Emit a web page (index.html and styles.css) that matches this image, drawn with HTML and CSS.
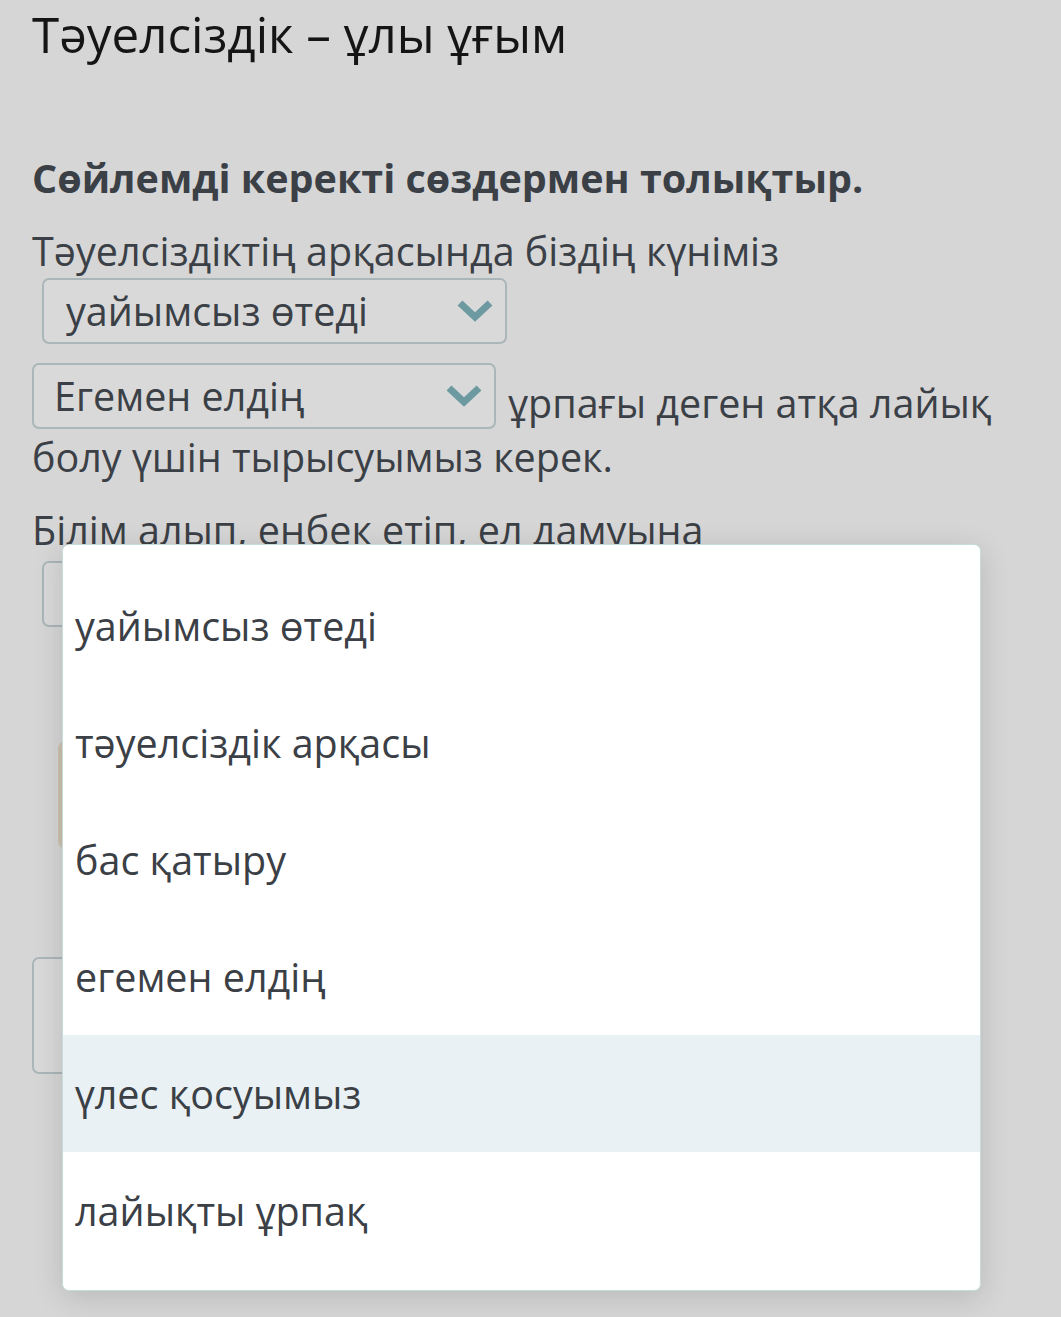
FILE: index.html
```html
<!DOCTYPE html>
<html lang="kk">
<head>
<meta charset="utf-8">
<title>Тәуелсіздік – ұлы ұғым</title>
<link rel="stylesheet" href="styles.css">
</head>
<body>
<div class="page">
  <h1 class="title">Тәуелсіздік – ұлы ұғым</h1>
  <h2 class="task">Сөйлемді керекті сөздермен толықтыр.</h2>

  <p class="q q1">Тәуелсіздіктің арқасында біздің күніміз<br><span class="sel sel-a"><span class="sel-text">уайымсыз өтеді</span><svg class="chev" viewBox="0 0 36 24"><path d="M3 4 L18 18 L33 4" /></svg></span></p>

  <p class="q q2"><span class="sel sel-b"><span class="sel-text">Егемен елдің</span><svg class="chev" viewBox="0 0 36 24"><path d="M3 4 L18 18 L33 4" /></svg></span> ұрпағы деген атқа лайық болу үшін тырысуымыз керек.</p>

  <p class="q q3">Білім алып, еңбек етіп, ел дамуына<br><span class="sel sel-c"><span class="sel-text">&nbsp;</span></span></p>

  <div class="box"></div>

  <div class="sel sel-d"></div>
</div>

<ul class="menu">
  <li class="opt">уайымсыз өтеді</li>
  <li class="opt">тәуелсіздік арқасы</li>
  <li class="opt">бас қатыру</li>
  <li class="opt">егемен елдің</li>
  <li class="opt opt-hover">үлес қосуымыз</li>
  <li class="opt">лайықты ұрпақ</li>
</ul>
</body>
</html>
```

FILE: styles.css
```css
html, body {
  margin: 0;
  padding: 0;
}
body {
  background: #d6d6d6;
  font-family: "Open Sans", "Noto Sans", sans-serif;
  color: #3b4046;
  width: 1061px;
  height: 1317px;
  overflow: hidden;
  position: relative;
}
.page {
  padding: 0 32px;
}
.title {
  margin: 0;
  padding-top: 1px;
  font-size: 49.3px;
  font-weight: 400;
  line-height: 66px;
  color: #151515;
}
.task {
  margin: 84px 0 0;
  font-size: 39.5px;
  font-weight: 700;
  line-height: 54px;
  color: #3b4046;
}
.q {
  margin: 19px 0 0;
  font-size: 39.5px;
  line-height: 54px;
}
.sel {
  display: inline-flex;
  align-items: center;
  justify-content: space-between;
  box-sizing: border-box;
  height: 66px;
  border: 2px solid #abb6b8;
  border-radius: 7px;
  background: #d9d9d9;
  padding: 0 12px 0 22px;
  vertical-align: baseline;
}
.sel-a {
  width: 465px;
  margin: 0 0 0 10px;
}
.sel-b {
  width: 464px;
  padding-left: 20px;
  margin-right: 2px;
  vertical-align: 7px;
}
.sel-c {
  width: 465px;
  margin: 4px 0 0 10px;
}
.chev {
  width: 36px;
  height: 24px;
  flex: none;
}
.chev path {
  fill: none;
  stroke: #6c9aa0;
  stroke-width: 7;
}
.box {
  margin: 114px -76px 0 26px;
  height: 108px;
  border-left: 4px solid #cbc2ad;
  border-right: 4px solid #cbc2ad;
  border-radius: 8px;
}
.sel-d {
  display: block;
  width: 300px;
  height: 117px;
  margin-top: 108px;
}
.menu {
  position: absolute;
  left: 62px;
  top: 544px;
  width: 919px;
  box-sizing: border-box;
  margin: 0;
  padding: 22px 0 21px;
  list-style: none;
  background: #ffffff;
  border: 1px solid #c6dcdb;
  border-radius: 7px;
  box-shadow: 0 6px 30px rgba(0, 0, 0, 0.14);
}
.opt {
  height: 117px;
  display: flex;
  align-items: center;
  padding-left: 12px;
  font-size: 39.5px;
  color: #3b4046;
}
.opt-hover {
  background: #e9f1f4;
}
```
